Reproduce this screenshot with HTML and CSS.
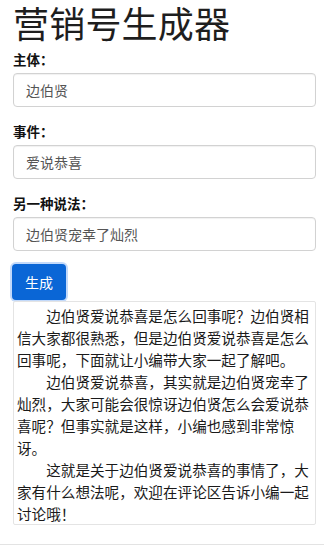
FILE: index.html
```html
<!DOCTYPE html>
<html lang="zh-CN">
<head>
<meta charset="utf-8">
<title>营销号生成器</title>
<link rel="stylesheet" href="styles.css">
</head>
<body>
<div class="page">
  <h1 class="title">营销号生成器</h1>
  <div class="group">
    <label class="label">主体：</label>
    <div class="input">边伯贤</div>
  </div>
  <div class="group">
    <label class="label">事件：</label>
    <div class="input">爱说恭喜</div>
  </div>
  <div class="group">
    <label class="label">另一种说法：</label>
    <div class="input">边伯贤宠幸了灿烈</div>
  </div>
  <button class="btn">生成</button>
  <div class="output">
    <p>边伯贤爱说恭喜是怎么回事呢？边伯贤相信大家都很熟悉，但是边伯贤爱说恭喜是怎么回事呢，下面就让小编带大家一起了解吧。</p>
    <p>边伯贤爱说恭喜，其实就是边伯贤宠幸了灿烈，大家可能会很惊讶边伯贤怎么会爱说恭喜呢？但事实就是这样，小编也感到非常惊讶。</p>
    <p>这就是关于边伯贤爱说恭喜的事情了，大家有什么想法呢，欢迎在评论区告诉小编一起讨论哦！</p>
  </div>
</div>
<div class="footer-line"></div>
</body>
</html>
```
FILE: styles.css
```css
html, body {
  margin: 0;
  padding: 0;
  background: #fff;
}
body {
  font-family: "Noto Sans CJK SC", "Noto Sans", sans-serif;
  color: #222;
}
.page {
  padding: 0 8px 0 13px;
  display: flex;
  flex-direction: column;
  align-items: stretch;
}
.title {
  margin: 0 0 6px 0;
  font-size: 36px;
  line-height: 44px;
  font-weight: 400;
  color: #1e1e1e;
  letter-spacing: 0.2px;
}
.group {
  display: flex;
  flex-direction: column;
  margin-bottom: 15px;
}
.label {
  font-size: 13.5px;
  line-height: 18px;
  font-weight: 700;
  margin-bottom: 5px;
  color: #111;
}
.input {
  height: 34px;
  box-sizing: border-box;
  border: 1px solid #d2d2d2;
  border-radius: 4px;
  box-shadow: inset 0 1px 1px rgba(0,0,0,0.06);
  padding: 0 12px;
  font-size: 14px;
  line-height: 32px;
  color: #555;
}
.btn {
  align-self: flex-start;
  margin: -2px 0 0 -1px;
  height: 36px;
  padding: 0 13px;
  border: none;
  border-radius: 4px;
  background: #0a66d6;
  color: #fff;
  font-family: "Noto Sans CJK SC", sans-serif;
  font-size: 14px;
  box-shadow: 0 0 0 2px rgba(120, 170, 245, 0.45);
}
.output {
  margin-top: 1px;
  border: 1px solid #e4e4e4;
  border-radius: 2px;
  padding: 3px 4px 1px 3px;
  font-size: 14.6px;
  line-height: 22px;
  color: #1a1a1a;
  height: 224px;
  box-sizing: border-box;
}
.output p {
  margin: 0;
  text-indent: 2em;
}
.footer-line {
  margin-top: 19px;
  border-top: 1px solid #e3e3e3;
}
```
